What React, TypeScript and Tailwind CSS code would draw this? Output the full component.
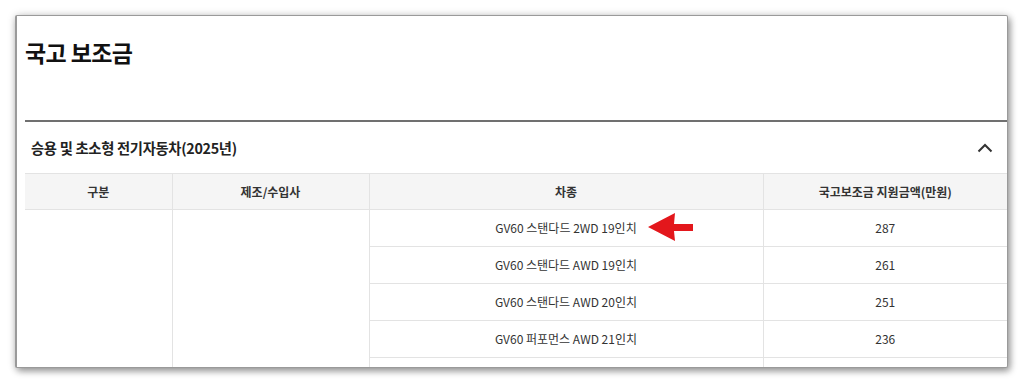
const rows = [
  { model: "GV60 스탠다드 2WD 19인치", amount: "287", marked: true },
  { model: "GV60 스탠다드 AWD 19인치", amount: "261" },
  { model: "GV60 스탠다드 AWD 20인치", amount: "251" },
  { model: "GV60 퍼포먼스 AWD 21인치", amount: "236" },
  { model: "", amount: "" },
];

const App = () => {
  return (
    <div
      className="w-[1024px] h-[384px] bg-white pt-[15px] pl-[15px]"
      style={{ fontFamily: '"Noto Sans CJK KR", "Noto Sans", sans-serif' }}
    >
      <div className="w-[993px] h-[353px] overflow-hidden bg-white border-l-2 border-t border-[#9a9a9a] border-r border-b rounded-[2px] shadow-[2px_3px_7px_rgba(0,0,0,0.4),0_0_10px_rgba(0,0,0,0.12)]">
        <div className="pl-[8px]">
          {/* Title */}
          <div className="h-[104px] pt-[21px]">
            <h1 className="text-[23px] leading-[30px] font-bold text-[#111] tracking-[-0.6px]">
              국고 보조금
            </h1>
          </div>
          <div className="h-[2px] bg-[#707070]" />

          {/* Section header */}
          <div className="h-[51px] flex items-center justify-between pl-[6px] pr-[14px]">
            <p className="text-[14.3px] font-bold text-[#222] tracking-[-0.3px]">
              승용 및 초소형 전기자동차(2025년)
            </p>
            <svg width="16" height="10" viewBox="0 0 16 10" fill="none">
              <path d="M1.5 8.5 L8 2 L14.5 8.5" stroke="#333" strokeWidth="2" />
            </svg>
          </div>

          {/* Table */}
          <table className="w-[982px] border-collapse table-fixed text-[12px] text-[#333]">
            <colgroup>
              <col className="w-[147px]" />
              <col className="w-[197px]" />
              <col className="w-[394px]" />
              <col className="w-[244px]" />
            </colgroup>
            <thead>
              <tr className="h-[36px] bg-[#f5f5f5] border-t border-b border-[#e3e3e3]">
                <th className="font-bold">구분</th>
                <th className="font-bold border-l border-[#e3e3e3]">제조/수입사</th>
                <th className="font-bold border-l border-[#e3e3e3]">차종</th>
                <th className="font-bold border-l border-[#e3e3e3]">국고보조금 지원금액(만원)</th>
              </tr>
            </thead>
            <tbody>
              {rows.map((row, i) => (
                <tr key={i} className="h-[37px]">
                  {i === 0 && (
                    <>
                      <td rowSpan={rows.length} />
                      <td rowSpan={rows.length} className="border-l border-[#e3e3e3]" />
                    </>
                  )}
                  <td className="relative text-center border-l border-b border-[#e3e3e3]">
                    {row.model}
                    {row.marked && (
                      <svg
                        className="absolute left-[278px] top-[2px]"
                        width="46"
                        height="30"
                        viewBox="0 0 46 30"
                      >
                        <polygon points="0,15 27,1 26,12 45,12 45,19 26,19 27,29" fill="#e3171c" />
                      </svg>
                    )}
                  </td>
                  <td className="text-center border-l border-b border-[#e3e3e3]">{row.amount}</td>
                </tr>
              ))}
            </tbody>
          </table>
        </div>
      </div>
    </div>
  );
};

export default App;
